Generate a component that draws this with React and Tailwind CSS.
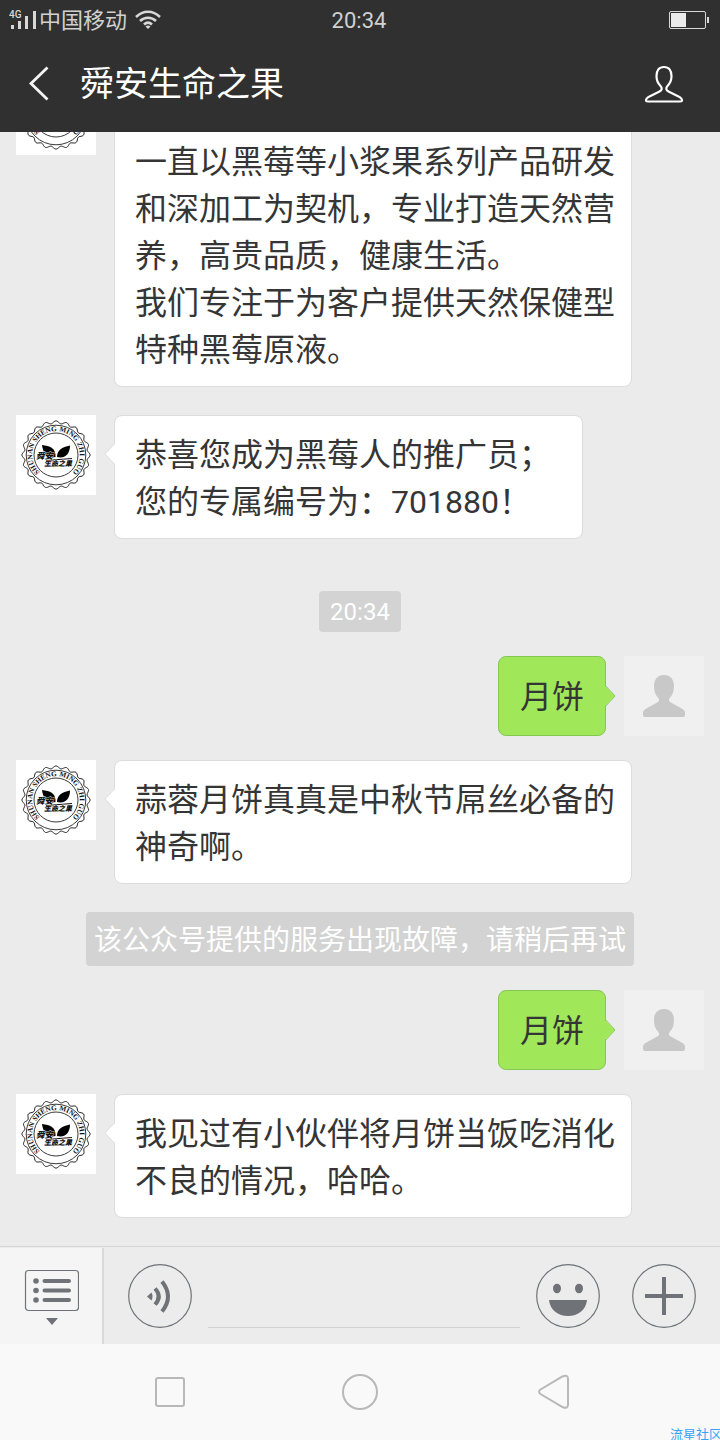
import React from "react";

const ringPoints = Array.from({ length: 241 }, (_, i) => {
  const a = (i / 240) * Math.PI * 2;
  const r = 32.8 + 1.3 * Math.cos(a * 20);
  return `${(40 + r * Math.sin(a)).toFixed(2)},${(40 - r * Math.cos(a)).toFixed(2)}`;
}).join(" ");

function BrandAvatar({ id }) {
  return (
    <svg viewBox="0 0 80 80" className="size-20 shrink-0 bg-white" role="img" aria-label="舜安生命之果">
      <polygon points={ringPoints} fill="none" stroke="#222" strokeWidth="1" strokeLinejoin="round" />
      <circle cx="40" cy="40" r="29.800" fill="none" stroke="#222" strokeWidth="0.9" />
      <circle cx="40" cy="40" r="22" fill="none" stroke="#222" strokeWidth="0.9" />
      <path id={id} d="M23.2 56.8 A23.8 23.8 0 1 1 56.8 56.8" fill="none" />
      <text fontSize="7.2" fill="#111" className="font-['Liberation_Serif',serif] font-bold">
        <textPath href={`#${id}`} startOffset="50%" textAnchor="middle">SHUNAN SHENG MING ZHI GUO</textPath>
      </text>
      <path d="M26 30 C34 31 40 33 39.500 42 C31 44 27 38 26 30Z" fill="#000" />
      <path d="M54 30.500 C46 32 41 35 41 42 C50 44 54 38 54 30.500Z" fill="#000" />
      <path d="M30 45.500 L56 43.500 M29 51.500 L54 50.500" stroke="#111" strokeWidth="1" />
      <g fill="#111" stroke="#fff" strokeWidth="0.6" paintOrder="stroke" className="font-['Noto_Sans_CJK_SC',sans-serif] font-black italic">
        <text x="20" y="44" fontSize="8.500">舜安</text>
        <text x="28" y="51" fontSize="7">生命之果</text>
      </g>
    </svg>
  );
}

function UserAvatar() {
  return (
    <svg viewBox="0 0 80 80" className="size-20 shrink-0 bg-[#f0f0f0]" role="img" aria-label="我">
      <path
        d="M40 19 C33.5 19 30 23.5 30 30 C30 35.500 31.500 39 34 41.500 C35.500 43 35.500 45 34 46 L21.500 53 C19.500 54.200 19 55.500 19 57 V59 Q19 61 21 61 H59 Q61 61 61 59 V57 C61 55.500 60.500 54.200 58.500 53 L46 46 C44.500 45 44.500 43 46 41.500 C48.500 39 50 35.500 50 30 C50 23.500 46.500 19 40 19Z"
        fill="#c8c8c8"
      />
    </svg>
  );
}

function Received({ id, lines, wide }) {
  return (
    <div className="flex items-start gap-[18px] pr-[72px]">
      <BrandAvatar id={id} />
      <div className={`relative rounded-lg border border-[#dcdcdc] bg-white pt-4 pr-4 pb-3 pl-5 text-[32px] leading-[47px] text-[#353535] ${wide ? "min-w-[469px]" : ""}`}>
        <svg viewBox="0 0 12 24" className="absolute top-[26px] -left-[11px] h-6 w-3">
          <path d="M12 1 L1 12 L12 23Z" fill="#fff" />
          <path d="M11 1 L1 12 L11 23" fill="none" stroke="#e0e0e0" />
        </svg>
        {lines.map((line, i) => (
          <p key={i} className="min-h-[47px]">{line}</p>
        ))}
      </div>
    </div>
  );
}

function Sent({ text }) {
  return (
    <div className="flex items-start justify-end gap-[18px]">
      <div className="relative flex h-20 items-center rounded-lg border border-[#84c752] bg-[#a0e75a] px-[21px] text-[32px] leading-[47px] text-[#353535]">
        <p className="pt-[3px]">{text}</p>
        <svg viewBox="0 0 12 24" className="absolute top-[27px] -right-[11px] h-6 w-3">
          <path d="M0 1 L11 12 L0 23Z" fill="#a0e75a" />
          <path d="M1 1 L11 12 L1 23" fill="none" stroke="#8ccb5c" />
        </svg>
      </div>
      <UserAvatar />
    </div>
  );
}

function StatusBar() {
  return (
    <div className="grid h-[38px] grid-cols-3 items-center pr-[11px] pl-[9px] text-[22px] leading-[38px] text-[#d0d0d0]">
      <div className="flex items-center gap-[2px]">
        <svg viewBox="0 0 28 22" className="h-[22px] w-7">
          <text x="0" y="8.500" fontSize="10" fill="#d8d8d8" className="font-[Roboto,sans-serif] font-medium">4G</text>
          <path d="M3.500 16V20M10.500 12V20M17.500 7V20M25.500 2V20" stroke="#d8d8d8" strokeWidth="3" />
        </svg>
        <span className="pt-[2px]">中国移动</span>
        <svg viewBox="0 0 26 20" className="ml-[6px] h-5 w-[26px]" fill="none" stroke="#d8d8d8" strokeWidth="2.500">
          <path d="M1 7 C8 0 18 0 25 7" />
          <path d="M5 11 C9.500 6.500 16.500 6.500 21 11" />
          <path d="M9 14.500 C11.500 12 14.500 12 17 14.500" />
          <path d="M10.500 16.500 Q13 14.500 15.500 16.500 L13 19Z" fill="#d8d8d8" stroke="none" />
        </svg>
      </div>
      <span className="pt-[2px] text-center">20:34</span>
      <svg viewBox="0 0 40 18" className="h-[18px] w-10 justify-self-end">
        <rect x="0.500" y="0.500" width="36" height="17" rx="1.500" fill="none" stroke="#d8d8d8" />
        <rect x="2" y="2" width="15" height="14" fill="#ebebeb" />
        <rect x="38" y="6" width="2" height="6" fill="#d8d8d8" />
      </svg>
    </div>
  );
}

function Header() {
  return (
    <header className="shrink-0 bg-[#303030]">
      <StatusBar />
      <div className="flex h-[94px] items-center px-7 pr-9 pb-[2px]">
        <button type="button" aria-label="返回" className="w-[52px]">
          <svg viewBox="0 0 22 36" className="h-9 w-[22px]" fill="none" stroke="#f5f5f5" strokeWidth="2.800">
            <path d="M19.500 1.500 L3 17.500 L19.500 33.500" />
          </svg>
        </button>
        <h1 className="flex-1 text-[34px] leading-[48px] text-white">舜安生命之果</h1>
        <button type="button" aria-label="公众号资料">
          <svg viewBox="0 0 40 38" className="h-[38px] w-10" fill="none" stroke="#fff" strokeWidth="2.200" strokeLinejoin="round">
            <path d="M20 2 C15 2 12.500 5.500 12.500 11 C12.500 16 14 18.500 16.500 21 C18.500 23 18 25 15.500 26.500 L4.500 32 C1.800 33.500 2 34.500 2 35.500 Q2 36.500 3.500 36.500 H36.500 Q38 36.500 38 35.500 C38 34.500 38.200 33.500 35.500 32 L24.500 26.500 C22 25 21.500 23 23.500 21 C26 18.500 27.500 16 27.500 11 C27.500 5.500 25 2 20 2Z" />
          </svg>
        </button>
      </div>
    </header>
  );
}

function Composer() {
  return (
    <form className="shrink-0 border-t border-[#d5d5d5] bg-[#ececec] pt-px" onSubmit={(e) => e.preventDefault()}>
      <div className="flex h-24 items-center pr-6">
        <button type="button" aria-label="菜单" className="flex h-full w-[104px] items-center justify-center border-r-2 border-[#d9d9d9] bg-[#f5f5f5]">
          <svg viewBox="0 0 56 58" className="h-[58px] w-14" fill="#6f7378">
            <rect x="2.500" y="3.500" width="53" height="40" rx="3" fill="none" stroke="#6f7378" strokeWidth="1.200" />
            <circle cx="13" cy="14" r="2.800" />
            <circle cx="13" cy="23.500" r="2.800" />
            <circle cx="13" cy="33" r="2.800" />
            <path d="M21.500 14H46M21.500 23.500H46M21.500 33H46" stroke="#6f7378" strokeWidth="4" strokeLinecap="round" />
            <path d="M23 51 H35 L29 58Z" />
          </svg>
        </button>
        <button type="button" aria-label="语音" className="ml-6 size-16">
          <svg viewBox="0 0 64 64" className="size-16" fill="none" stroke="#6f7378">
            <circle cx="32" cy="32" r="31.300" strokeWidth="1.200" />
            <path d="M19 32.500 L23.500 28.500 Q25.500 32.500 23.500 36.500Z" fill="#6f7378" stroke="none" />
            <path d="M27 24.500 Q34.500 32.500 27 40.500" strokeWidth="4" />
            <path d="M34 17.500 Q46 32.500 34 47.500" strokeWidth="4" />
          </svg>
        </button>
        <input type="text" aria-label="输入消息" className="mx-4 h-16 min-w-0 flex-1 border-b border-[#d3d3d3] bg-transparent text-[32px] outline-none" />
        <button type="button" aria-label="表情" className="size-16">
          <svg viewBox="0 0 64 64" className="size-16" fill="#6f7378">
            <circle cx="32" cy="32" r="31.300" fill="none" stroke="#6f7378" strokeWidth="1.200" />
            <ellipse cx="21" cy="24.500" rx="4" ry="4.800" />
            <ellipse cx="43" cy="24.500" rx="4" ry="4.800" />
            <path d="M13 36 H51 C50 46 42 52 32 52 C22 52 14 46 13 36Z" />
          </svg>
        </button>
        <button type="button" aria-label="更多" className="ml-8 size-16">
          <svg viewBox="0 0 64 64" className="size-16" fill="none" stroke="#6f7378">
            <circle cx="32" cy="32" r="31.300" strokeWidth="1.200" />
            <path d="M32 13V51M13 32H51" strokeWidth="4" />
          </svg>
        </button>
      </div>
    </form>
  );
}

function SystemNav() {
  return (
    <nav className="relative flex h-24 shrink-0 items-center justify-center gap-[154px] overflow-hidden bg-[#f9f9f9]">
      <button type="button" aria-label="最近任务">
        <svg viewBox="0 0 36 36" className="size-9" fill="none" stroke="#b8b8b8" strokeWidth="2">
          <rect x="4" y="4" width="28" height="28" rx="2" />
        </svg>
      </button>
      <button type="button" aria-label="主屏幕">
        <svg viewBox="0 0 36 36" className="size-9" fill="none" stroke="#b8b8b8" strokeWidth="2">
          <circle cx="18" cy="18" r="17" />
        </svg>
      </button>
      <button type="button" aria-label="返回上一级">
        <svg viewBox="0 0 36 36" className="size-9 overflow-visible" fill="none" stroke="#b8b8b8" strokeWidth="2">
          <path d="M8.500 15.500 L30.500 2.500 Q36 0 36 5 V30.500 Q36 35.500 30.500 33 L8.500 20 Q5.500 17.800 8.500 15.500Z" />
        </svg>
      </button>
      <span className="absolute right-[-2px] -bottom-1 text-[13px] leading-[18px] text-[#35a4f5]">流星社区</span>
    </nav>
  );
}

export default function App() {
  return (
    <div className="flex h-screen flex-col bg-[#ebebeb] font-[Roboto,'Noto_Sans_CJK_SC',sans-serif]">
      <Header />
      <main className="flex min-h-0 flex-1 flex-col justify-end overflow-hidden px-4 pb-7">
        <Received
          id="ring-a"
          lines={[
            "",
            "一直以黑莓等小浆果系列产品研发和深加工为契机，专业打造天然营养，高贵品质，健康生活。",
            "我们专注于为客户提供天然保健型特种黑莓原液。",
          ]}
        />
        <div className="mt-7">
          <Received id="ring-b" wide lines={["恭喜您成为黑莓人的推广员；", "您的专属编号为：701880！"]} />
        </div>
        <time className="mt-[52px] self-center rounded-sm bg-[#d3d3d3] px-[11px] pt-[2px] text-[24px] leading-[39px] text-white">20:34</time>
        <div className="mt-6">
          <Sent text="月饼" />
        </div>
        <div className="mt-6">
          <Received id="ring-c" lines={["蒜蓉月饼真真是中秋节屌丝必备的神奇啊。"]} />
        </div>
        <p className="mt-7 self-center rounded-sm bg-[#d3d3d3] px-2 pt-[3px] text-[28px] leading-[51px] text-white">该公众号提供的服务出现故障，请稍后再试</p>
        <div className="mt-6">
          <Sent text="月饼" />
        </div>
        <div className="mt-6">
          <Received id="ring-d" lines={["我见过有小伙伴将月饼当饭吃消化不良的情况，哈哈。"]} />
        </div>
      </main>
      <Composer />
      <SystemNav />
    </div>
  );
}
